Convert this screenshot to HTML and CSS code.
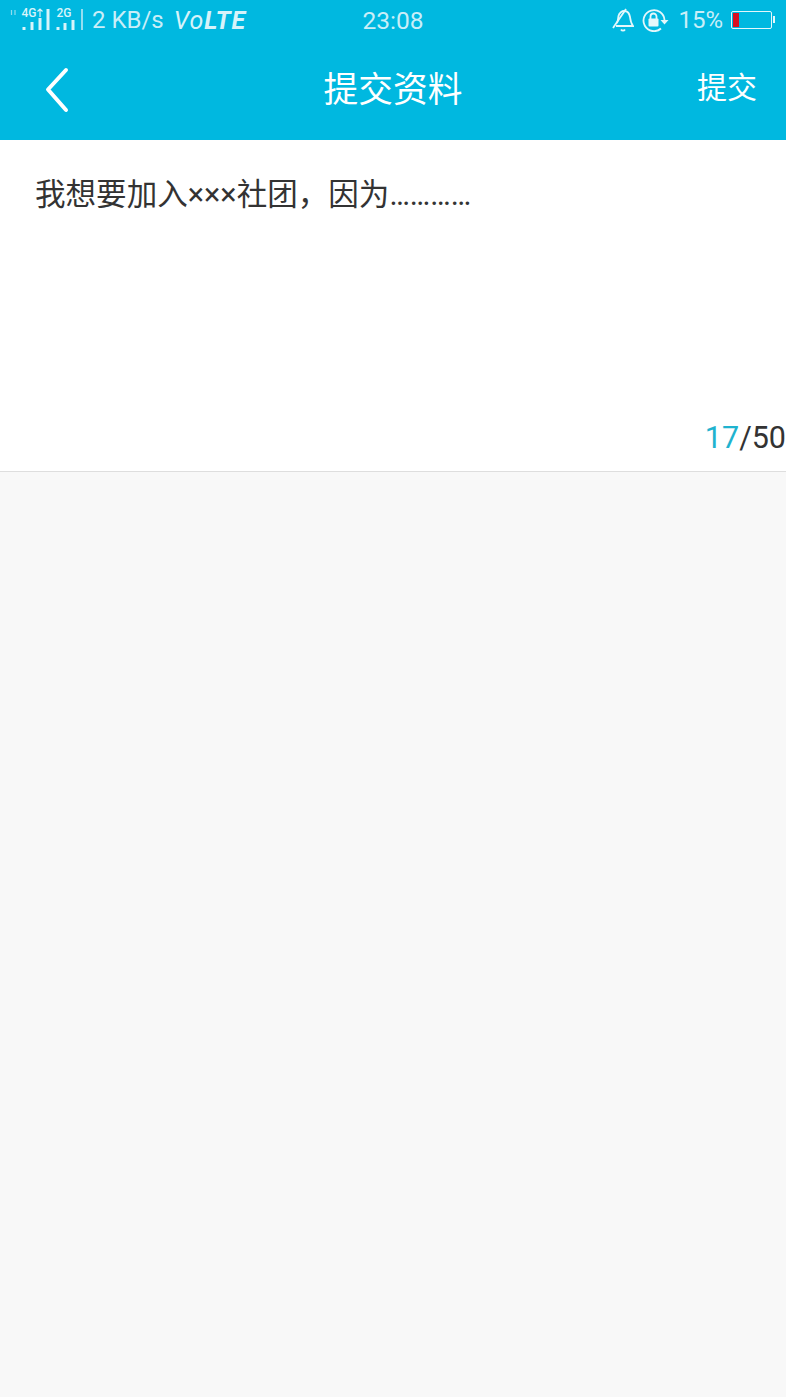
FILE: index.html
```html
<!DOCTYPE html>
<html lang="zh-CN">
<head>
  <meta charset="UTF-8" />
  <meta name="viewport" content="width=device-width, initial-scale=1.0"/>
  <title>提交资料</title>
  <link rel="stylesheet" href="styles.css">
</head>
<body>

  <div class="header">
    <div class="statusbar">
      <div class="status-left">
        <svg class="signal" width="84" height="40" viewBox="0 0 84 40" fill="none">
          <path d="M11.500 10v5M15 10v5" stroke="#8fdcef" stroke-width="1.200"/>
          <text x="21.500" y="17" class="sig-label">4G</text>
          <path d="M40 9v8M37.500 11.500l2.500-2.500 2.500 2.500" stroke="#d8f4fa" stroke-width="1.200"/>
          <path d="M24 30v-3M32 30v-8M40 30v-12M48 30v-21" stroke="#d8f4fa" stroke-width="3"/>
          <text x="56.500" y="17" class="sig-label">2G</text>
          <path d="M58 30v-3M65 30v-7M73 30v-10" stroke="#d8f4fa" stroke-width="3"/>
          <path d="M82 30v-21" stroke="#a5e3f2" stroke-width="1.800"/>
        </svg>
        <span class="speed">2 KB/s</span>
        <span class="volte">Vo<b>LTE</b></span>
      </div>
      <div class="status-time">23:08</div>
      <div class="status-right">
        <svg width="22" height="24" viewBox="0 0 22 24" fill="none" stroke="#e4f7fb" stroke-width="1.800">
          <path d="M5 15c1-2 1-4 1.500-7C7 5 10 2.500 13 3c3 .5 4.500 3 5 6 .5 4 1.500 7 3 9H4"/>
          <path d="M1 20L14 1"/>
          <path d="M9 21.500c1 1.500 3 1.500 4 0"/>
        </svg>
        <svg class="lock" width="28" height="24" viewBox="0 0 28 24" fill="none">
          <path d="M20 20.500a10.500 10.500 0 1 1 3.500-8.500" stroke="#e4f7fb" stroke-width="1.800"/>
          <path d="M19.500 12h8l-4 4.500z" fill="#e4f7fb"/>
          <rect x="7.500" y="10.500" width="10" height="8" rx="1" fill="#e4f7fb"/>
          <path d="M9.500 11V8.500a3 3 0 0 1 6 0V11" stroke="#e4f7fb" stroke-width="1.800"/>
        </svg>
        <span class="battery-pct">15%</span>
        <div class="battery"><div class="battery-level"></div></div>
      </div>
    </div>
    <div class="navbar">
      <svg class="back" width="26" height="46" viewBox="0 0 26 46" fill="none">
        <path d="M21 3L3 22.500 21 43" stroke="#fff" stroke-width="4" stroke-linecap="round" stroke-linejoin="round"/>
      </svg>
      <div class="title">提交资料</div>
      <div class="submit">提交</div>
    </div>
  </div>

  <div class="editor">
    <p class="editor-text">我想要加入×××社团，因为…………</p>
    <div class="counter"><span class="count-now">17</span>/50</div>
  </div>

</body>
</html>
```

FILE: styles.css
```css
html, body {
  height: 100%;
}
body {
  margin: 0;
  height: 1397px;
  overflow: hidden;
  background: #f8f8f8;
  font-family: Roboto, "Noto Sans CJK SC", sans-serif;
}
.header {
  height: 140px;
  background: #00b8e0;
  color: #fff;
}
.statusbar {
  height: 40px;
  display: flex;
  justify-content: space-between;
  align-items: center;
  position: relative;
  padding: 0 14px 0 0;
  color: #c9eef8;
}
.status-left {
  display: flex;
  align-items: center;
}
.signal {
  display: block;
}
.sig-label {
  font-size: 12px;
  font-weight: 500;
  fill: #d8f4fa;
}
.speed {
  font-size: 24px;
  margin-left: 8px;
}
.volte {
  font-size: 25px;
  font-style: italic;
  letter-spacing: 0.900px;
  margin-left: 10px;
  font-weight: 400;
  color: #d6f3fa;
}
.volte b {
  font-weight: 700;
}
.status-time {
  position: absolute;
  left: 0;
  right: 0;
  text-align: center;
  font-size: 24.500px;
}
.status-right {
  display: flex;
  align-items: center;
}
.lock {
  margin-left: 7px;
}
.battery-pct {
  font-size: 24px;
  margin: 0 8px 0 9px;
}
.battery {
  width: 41px;
  height: 18px;
  border: 1.500px solid #e4f7fb;
  border-radius: 2px;
  box-sizing: border-box;
  padding: 1px;
  position: relative;
}
.battery::after {
  content: "";
  position: absolute;
  right: -4px;
  top: 4px;
  width: 2px;
  height: 7px;
  background: #e4f7fb;
}
.battery-level {
  width: 6px;
  height: 100%;
  background: #d81020;
}
.navbar {
  height: 100px;
  display: flex;
  justify-content: space-between;
  align-items: center;
  position: relative;
  padding: 0 29px 0 45px;
}
.back {
  display: block;
}
.title {
  position: absolute;
  left: 0;
  right: 0;
  text-align: center;
  font-size: 34.700px;
  line-height: 100px;
}
.submit {
  font-size: 30px;
  margin-top: -10px;
  position: relative;
}
.editor {
  height: 331px;
  background: #fff;
  border-bottom: 1px solid #dedede;
  position: relative;
}
.editor-text {
  margin: 0;
  padding: 34px 0 0 35px;
  font-size: 30.550px;
  line-height: 42px;
  color: #333;
}
.counter {
  position: absolute;
  right: 0;
  bottom: 15px;
  font-size: 30.500px;
  line-height: 36px;
  color: #333;
}
.count-now {
  color: #1fb3cf;
}
```
